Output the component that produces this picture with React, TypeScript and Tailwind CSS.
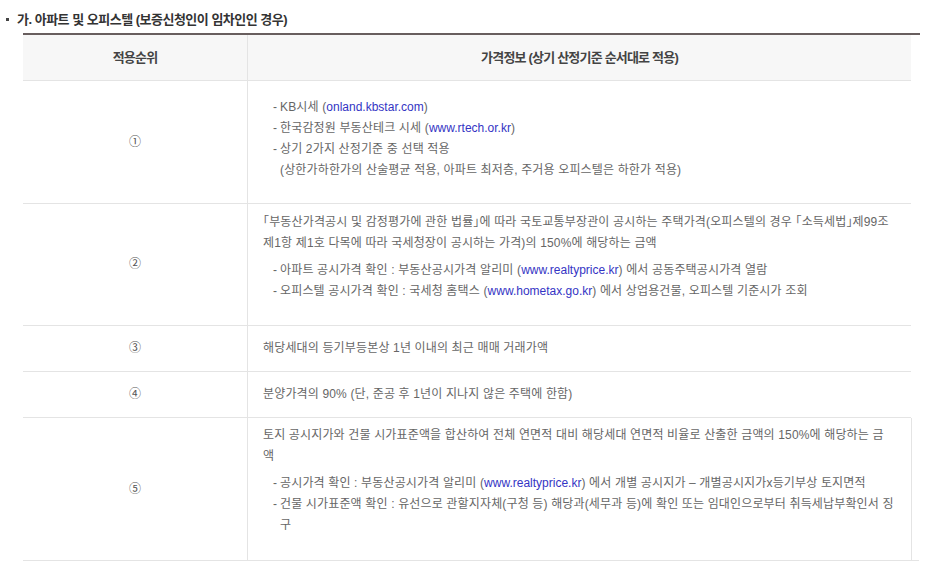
import type React from "react"

const font = { fontFamily: '"Liberation Sans", "Noto Sans CJK KR", sans-serif' }

const Link: React.FC<{ children: React.ReactNode }> = ({ children }) => (
	<span className="text-[#3434c4] tracking-normal">{children}</span>
)

// 낫표는 반각으로 표시
const Q: React.FC<{ children: React.ReactNode }> = ({ children }) => (
	<span className="[font-feature-settings:'halt']">{children}</span>
)

// 목록 한 줄 ("- " 로 시작)
const Item: React.FC<{ children: React.ReactNode; cont?: React.ReactNode }> = ({ children, cont }) => (
	<div className="ml-[10px]">
		<div className="flex whitespace-nowrap">
			<span className="w-[7px] shrink-0">-</span>
			<span>{children}</span>
		</div>
		{cont && <div className="pl-[7px] whitespace-nowrap">{cont}</div>}
	</div>
)

const Row: React.FC<{
	no: string
	h: string
	pt?: string
	center?: boolean
	last?: boolean
	children: React.ReactNode
}> = ({ no, h, pt, center, last, children }) => (
	<div
		className={`grid border-b border-[#e4e4e4] ${h} ${
			last ? "w-[896px] grid-cols-[224px_665px_7px]" : "w-[888px] grid-cols-[224px_664px]"
		}`}
	>
		<div className="flex items-center justify-center text-[12px] text-[#555]">{no}</div>
		<div
			className={`border-l border-[#e4e4e4] pl-[15px] ${last ? "border-r" : ""} ${
				center ? "flex items-center" : pt
			}`}
		>
			{children}
		</div>
		{last && <div />}
	</div>
)

export default function App() {
	return (
		<div className="bg-white w-[935px] h-[581px] pt-[9px] pl-[6px] text-[12px] leading-[21px] text-[#666] tracking-[0.15px]" style={font}>
			{/* 제목 */}
			<div className="flex items-center h-[20px]">
				<span className="w-[3px] h-[3px] bg-[#444] mr-[8px]" />
				<span className="text-[13px] font-bold text-[#333] tracking-[-0.5px]">
					가. 아파트 및 오피스텔 (보증신청인이 임차인인 경우)
				</span>
			</div>

			<div className="ml-[17px] mt-[4px] w-[897px] border-t-2 border-[#685e5e]">
				{/* 헤더 */}
				<div className="grid grid-cols-[224px_664px] w-[888px] h-[46px] bg-[#f7f7f7] border-b border-[#e4e4e4] text-[13px] font-bold text-[#444] tracking-[-0.8px]">
					<div className="flex items-center justify-center">적용순위</div>
					<div className="flex items-center justify-center border-l border-[#e4e4e4]">
						가격정보 (상기 산정기준 순서대로 적용)
					</div>
				</div>

				<Row no="①" h="h-[123px]" pt="pt-[16px]">
					<Item>
						KB시세 (<Link>onland.kbstar.com</Link>)
					</Item>
					<Item>
						한국감정원 부동산테크 시세 (<Link>www.rtech.or.kr</Link>)
					</Item>
					<Item cont="(상한가하한가의 산술평균 적용, 아파트 최저층, 주거용 오피스텔은 하한가 적용)">
						상기 2가지 산정기준 중 선택 적용
					</Item>
				</Row>

				<Row no="②" h="h-[122px]" pt="pt-[8px]">
					<div className="whitespace-nowrap">
						<Q>「</Q>부동산가격공시 및 감정평가에 관한 법률<Q>」</Q>에 따라 국토교통부장관이 공시하는 주택가격(오피스텔의 경우{" "}
						<Q>「</Q>소득세법<Q>」</Q>제99조
					</div>
					<div className="whitespace-nowrap mb-[6px]">
						제1항 제1호 다목에 따라 국세청장이 공시하는 가격)의 150%에 해당하는 금액
					</div>
					<Item>
						아파트 공시가격 확인 : 부동산공시가격 알리미 (<Link>www.realtyprice.kr</Link>) 에서 공동주택공시가격 열람
					</Item>
					<Item>
						오피스텔 공시가격 확인 : 국세청 홈택스 (<Link>www.hometax.go.kr</Link>) 에서 상업용건물, 오피스텔 기준시가 조회
					</Item>
				</Row>

				<Row no="③" h="h-[46px]" center>
					해당세대의 등기부등본상 1년 이내의 최근 매매 거래가액
				</Row>

				<Row no="④" h="h-[46px]" center>
					분양가격의 90% (단, 준공 후 1년이 지나지 않은 주택에 한함)
				</Row>

				<Row no="⑤" h="h-[143px]" pt="pt-[7px]" last>
					<div className="whitespace-nowrap">
						토지 공시지가와 건물 시가표준액을 합산하여 전체 연면적 대비 해당세대 연면적 비율로 산출한 금액의 150%에 해당하는 금
					</div>
					<div className="mb-[6px]">액</div>
					<Item>
						공시가격 확인 : 부동산공시가격 알리미 (<Link>www.realtyprice.kr</Link>) 에서 개별 공시지가 – 개별공시지가x등기부상 토지면적
					</Item>
					<Item cont="구">
						건물 시가표준액 확인 : 유선으로 관할지자체(구청 등) 해당과(세무과 등)에 확인 또는 임대인으로부터 취득세납부확인서 징
					</Item>
				</Row>
			</div>
		</div>
	)
}
